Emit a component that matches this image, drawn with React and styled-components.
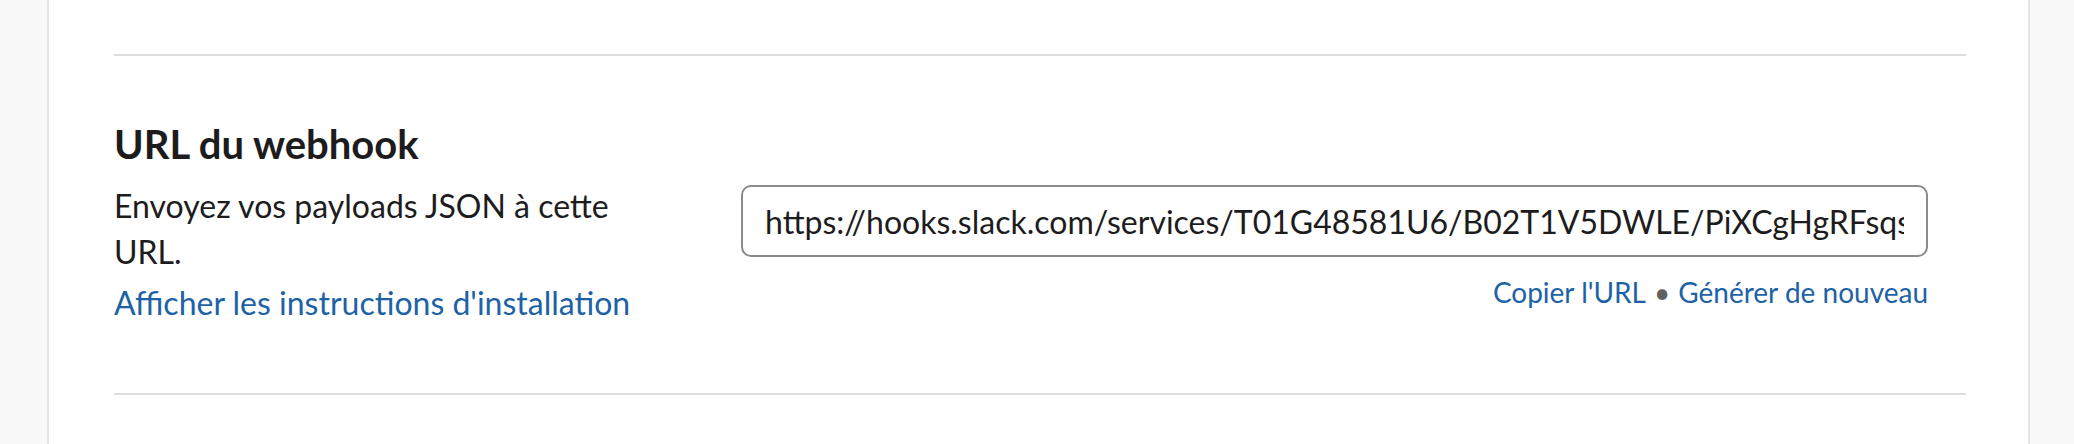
import React from "react";
import styled, { createGlobalStyle } from "styled-components";

const GlobalStyle = createGlobalStyle`
  html, body {
    margin: 0;
    padding: 0;
    background: #f8f8f8;
    font-family: Lato, "Noto Sans", sans-serif;
    color: #1d1c1d;
  }
`;

const WEBHOOK_URL =
  "https://hooks.slack.com/services/T01G48581U6/B02T1V5DWLE/PiXCgHgRFsqs7JdX9kLmQe";

export default function App() {
  return (
    <Page>
      <GlobalStyle />
      <Panel>
        <Divider />
        <Section>
          <Heading>URL du webhook</Heading>
          <Row>
            <Info>
              <Description>Envoyez vos payloads JSON à cette URL.</Description>
              <Link href="#">Afficher les instructions d'installation</Link>
            </Info>
            <Field>
              <UrlInput readOnly value={WEBHOOK_URL} />
              <Actions>
                <Link href="#" $small>Copier l'URL</Link>
                <Dot>•</Dot>
                <Link href="#" $small>Générer de nouveau</Link>
              </Actions>
            </Field>
          </Row>
        </Section>
        <Divider />
      </Panel>
    </Page>
  );
}

const Page = styled.div`
  display: flex;
  height: 444px;
  padding: 0 44px 0 47px;
  box-sizing: border-box;
  overflow: hidden;
`;

const Panel = styled.div`
  flex: 1;
  background: #fff;
  border-left: 2px solid #e4e4e4;
  border-right: 2px solid #e4e4e4;
  padding: 54px 62px 0 65px;
`;

const Divider = styled.div`
  height: 2px;
  background: #dddddd;
`;

const Section = styled.div`
  padding: 64px 0 67px;
`;

const Heading = styled.h2`
  margin: 0 0 15px;
  font-size: 40px;
  line-height: 48px;
  font-weight: 700;
  color: #1d1c1d;
`;

const Row = styled.div`
  display: flex;
  align-items: flex-start;
`;

const Info = styled.div`
  flex: 0 0 530px;
  margin-right: 97px;
  display: flex;
  flex-direction: column;
  align-items: flex-start;
`;

const Description = styled.p`
  margin: 0 0 5px;
  font-size: 32px;
  line-height: 46px;
`;

const Link = styled.a`
  color: #1e62a6;
  text-decoration: none;
  white-space: nowrap;
  font-size: ${(p) => (p.$small ? "28px" : "32px")};
  line-height: ${(p) => (p.$small ? "36px" : "46px")};
`;

const Field = styled.div`
  width: 1187px;
  margin-top: 2px;
  display: flex;
  flex-direction: column;
  align-items: stretch;
`;

const UrlInput = styled.input`
  box-sizing: border-box;
  height: 72px;
  width: 100%;
  padding: 0 22px;
  border: 2px solid #8a8a8a;
  border-radius: 10px;
  font-family: Lato, "Noto Sans", sans-serif;
  font-size: 32px;
  color: #1d1c1d;
  background: #fff;
  outline: none;
`;

const Actions = styled.div`
  margin-top: 17px;
  display: flex;
  justify-content: flex-end;
  align-items: center;
  gap: 8px;
`;

const Dot = styled.span`
  color: #616061;
  font-size: 28px;
  line-height: 36px;
`;
